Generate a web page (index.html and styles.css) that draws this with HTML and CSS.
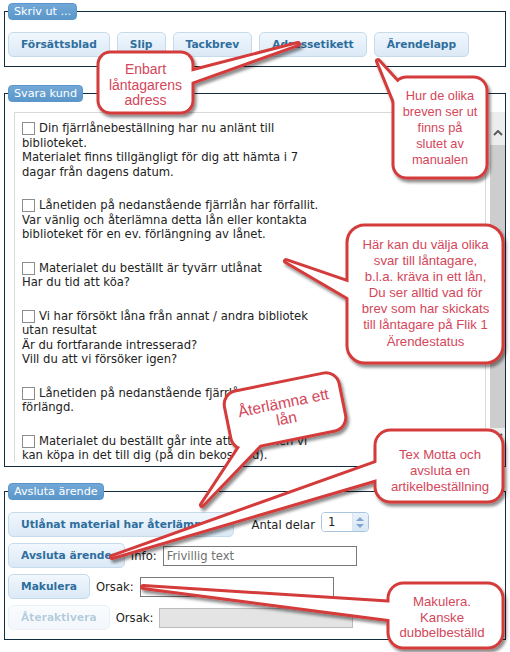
FILE: index.html
```html
<!DOCTYPE html>
<html lang="sv">
<head>
<meta charset="utf-8">
<title>Ärende</title>
<link rel="stylesheet" href="styles.css">
</head>
<body>
<div class="page">
  <fieldset class="fs fs-print">
    <legend>Skriv ut ...</legend>
    <div class="btnrow">
      <button class="btn">Försättsblad</button>
      <button class="btn">Slip</button>
      <button class="btn">Tackbrev</button>
      <button class="btn">Adressetikett</button>
      <button class="btn">Ärendelapp</button>
    </div>
  </fieldset>

  <fieldset class="fs fs-reply">
    <legend>Svara kund</legend>
    <div class="scrollwrap">
      <div class="letters">
        <p class="opt"><span class="cb"></span>Din fjärrlånebeställning har nu anlänt till<br>biblioteket.<br>Materialet finns tillgängligt för dig att hämta i 7<br>dagar från dagens datum.</p>
        <p class="opt"><span class="cb"></span>Lånetiden på nedanstående fjärrlån har förfallit.<br>Var vänlig och återlämna detta lån eller kontakta<br>biblioteket för en ev. förlängning av lånet.</p>
        <p class="opt"><span class="cb"></span>Materialet du beställt är tyvärr utlånat<br>Har du tid att köa?</p>
        <p class="opt"><span class="cb"></span>Vi har försökt låna från annat / andra bibliotek<br>utan resultat<br>Är du fortfarande intresserad?<br>Vill du att vi försöker igen?</p>
        <p class="opt"><span class="cb"></span>Lånetiden på nedanstående fjärrlån har blivit<br>förlängd.</p>
        <p class="opt"><span class="cb"></span>Materialet du beställt går inte att låna, men vi<br>kan köpa in det till dig (på din bekostnad).</p>
      </div>
      <div class="sbar">
        <svg class="chev chev-up" width="10" height="6" viewBox="0 0 10 6"><polyline points="1,5 5,1 9,5"/></svg>
        <div class="thumb"></div>
        <svg class="chev chev-down" width="10" height="6" viewBox="0 0 10 6"><polyline points="1,1 5,5 9,1"/></svg>
      </div>
    </div>
  </fieldset>

  <fieldset class="fs fs-close">
    <legend>Avsluta ärende</legend>
    <div class="row">
      <button class="btn">Utlånat material har återlämnats</button>
      <span class="lbl lbl-antal">Antal delar</span>
      <span class="spin"><span class="spin-val">1</span><span class="spin-btns"><span class="tri-up"></span><span class="tri-down"></span></span></span>
    </div>
    <div class="row">
      <button class="btn">Avsluta ärende</button>
      <span class="lbl">Info:</span>
      <input class="inp" type="text" placeholder="Frivillig text">
    </div>
    <div class="row">
      <button class="btn">Makulera</button>
      <span class="lbl">Orsak:</span>
      <input class="inp" type="text">
    </div>
    <div class="row">
      <button class="btn" disabled>Återaktivera</button>
      <span class="lbl">Orsak:</span>
      <input class="inp" type="text" disabled>
    </div>
  </fieldset>

  <svg class="callouts" width="510" height="652" viewBox="0 0 510 652">
    <defs>
      <filter id="sh" filterUnits="userSpaceOnUse" x="0" y="0" width="510" height="652">
        <feDropShadow dx="2" dy="3" stdDeviation="1.6" flood-color="#000" flood-opacity="0.45"/>
      </filter>
    </defs>
    <g filter="url(#sh)">
      <g class="edge"><rect x="99.5" y="53.5" width="92" height="58" rx="11"/><polygon points="298,44 186,73 186,84"/></g>
      <g class="fill"><rect x="99.5" y="53.5" width="92" height="58" rx="11"/><polygon points="298,44 186,73 186,84"/></g>
    </g>
    <g filter="url(#sh)">
      <g class="edge"><rect x="394.5" y="78.5" width="91" height="98" rx="12"/><polygon points="378,61 399,84 398,110"/></g>
      <g class="fill"><rect x="394.5" y="78.5" width="91" height="98" rx="12"/><polygon points="378,61 399,84 398,110"/></g>
    </g>
    <g filter="url(#sh)">
      <g class="edge"><rect x="348.5" y="226.5" width="153" height="135" rx="16"/><polygon points="286,261 356,285 356,302"/></g>
      <g class="fill"><rect x="348.5" y="226.5" width="153" height="135" rx="16"/><polygon points="286,261 356,285 356,302"/></g>
    </g>
    <g filter="url(#sh)">
      <g class="edge"><rect x="228" y="383" width="114" height="56" rx="12" transform="rotate(-11.5 285 411)"/><polygon points="202,505 242.6,443.1 266.1,438.3"/></g>
      <g class="fill"><rect x="228" y="383" width="114" height="56" rx="12" transform="rotate(-11.5 285 411)"/><polygon points="202,505 242.6,443.1 266.1,438.3"/></g>
    </g>
    <g filter="url(#sh)">
      <g class="edge"><rect x="376.5" y="431.5" width="125" height="69" rx="14"/><polygon points="112,557 384,460 384,477"/></g>
      <g class="fill"><rect x="376.5" y="431.5" width="125" height="69" rx="14"/><polygon points="112,557 384,460 384,477"/></g>
    </g>
    <g filter="url(#sh)">
      <g class="edge"><rect x="389.5" y="584.5" width="112" height="62" rx="14"/><polygon points="143,587 396,603 396,620"/></g>
      <g class="fill"><rect x="389.5" y="584.5" width="112" height="62" rx="14"/><polygon points="143,587 396,603 396,620"/></g>
    </g>
  </svg>

  <div class="ctext c1">Enbart<br>låntagarens<br>adress</div>
  <div class="ctext c2">Hur de olika<br>breven ser ut<br>finns på<br>slutet av<br>manualen</div>
  <div class="ctext c3">Här kan du välja olika<br>svar till låntagare,<br>b.l.a. kräva in ett lån,<br>Du ser alltid vad för<br>brev som har skickats<br>till låntagare på Flik 1<br>Ärendestatus</div>
  <div class="ctext c4">Återlämna ett<br>lån</div>
  <div class="ctext c5">Tex Motta och<br>avsluta en<br>artikelbeställning</div>
  <div class="ctext c6">Makulera.<br>Kanske<br>dubbelbeställd</div>
</div>
</body>
</html>
```

FILE: styles.css
```css
* { box-sizing: border-box; }

body {
  margin: 0;
  background: #fff;
  font-family: "DejaVu Sans", Verdana, sans-serif;
  color: #222;
}

.page {
  position: relative;
  width: 510px;
  height: 652px;
  overflow: hidden;
}

/* fieldsets */
.fs {
  margin: 0 4px;
  border: 1px solid #112b3f;
  padding: 12px 0 9px 3px;
  min-width: 0;
}
.fs-print { margin-top: 3px; }
.fs-reply { margin-top: 18px; padding: 10px 0 4px 3px; }
.fs-close { margin-top: 16px; }

legend {
  background: linear-gradient(#72a8d7, #5b97ca);
  color: #fff;
  font-size: 11.2px;
  line-height: 15px;
  padding: 0 5px;
  border: 1px solid #5a96c9;
  border-radius: 4px;
}

/* buttons */
.btnrow { display: flex; gap: 7px; }

.btn {
  height: 25px;
  padding: 0 12px;
  border: 1px solid #c5dbec;
  border-radius: 5px;
  background: linear-gradient(#f1f7fd, #dbe9f6);
  color: #2e6e9e;
  font-family: "DejaVu Sans", Verdana, sans-serif;
  font-weight: bold;
  font-size: 10.7px;
  line-height: 23px;
  white-space: nowrap;
}
.btn:disabled { opacity: 0.35; }

/* reply list */
.scrollwrap {
  display: flex;
  gap: 4px;
  height: 350px;
  margin-left: 6px;
}
.letters {
  flex: 1;
  border: 1px solid #d9d9d9;
  border-bottom: none;
  overflow: hidden;
  padding: 8px 0 0 7px;
  font-size: 11.6px;
  line-height: 14.5px;
}
.opt {
  margin: 0 0 19px;
  white-space: nowrap;
}
.cb {
  display: inline-block;
  width: 13px;
  height: 13px;
  border: 1px solid #8c8c8c;
  background: #fff;
  vertical-align: -3px;
  margin-right: 4px;
}

.sbar {
  width: 15px;
  background: #ededed;
  display: flex;
  flex-direction: column;
  align-items: center;
}
.chev polyline {
  fill: none;
  stroke: #5a5a5a;
  stroke-width: 2;
}
.chev-up { margin-top: 18px; }
.thumb {
  width: 15px;
  height: 283px;
  margin-top: 9px;
  background: #cdcdcd;
}
.chev-down { margin-top: 5px; }

/* close rows */
.row {
  display: flex;
  align-items: center;
  gap: 6px;
  height: 25px;
}
.row + .row { margin-top: 6px; }

.lbl { font-size: 11.6px; white-space: nowrap; }
.lbl-antal { margin-left: 12px; }

.spin {
  display: inline-flex;
  width: 48px;
  height: 20px;
  border: 1px solid #a9c5df;
  border-radius: 4px;
  overflow: hidden;
  margin-top: -5px;
}
.spin-val {
  flex: 1;
  background: #fff;
  padding-left: 6px;
  font-size: 11.6px;
  line-height: 18px;
}
.spin-btns {
  width: 16px;
  background: linear-gradient(#eaf2fa, #d8e7f5);
  border-left: 1px solid #dbe7f2;
  display: flex;
  flex-direction: column;
  align-items: center;
  justify-content: center;
  gap: 3px;
}
.tri-up, .tri-down {
  width: 0;
  height: 0;
  border-left: 4px solid transparent;
  border-right: 4px solid transparent;
}
.tri-up { border-bottom: 4px solid #7fa7cf; }
.tri-down { border-top: 4px solid #7fa7cf; }

.inp {
  width: 194px;
  height: 20px;
  border: 1px solid #7a7a7a;
  border-radius: 0;
  padding: 0 3px;
  font-family: "DejaVu Sans", Verdana, sans-serif;
  font-size: 11.6px;
  color: #222;
  background: #fff;
}
.inp::placeholder { color: #707070; }
.inp:disabled { background: #e4e4e4; border-color: #bdbdbd; }

/* callouts */
.callouts {
  position: absolute;
  left: 0;
  top: 0;
  pointer-events: none;
}
.edge {
  fill: #d43a3a;
  stroke: #d43a3a;
  stroke-width: 6;
  stroke-linejoin: round;
}
.fill { fill: #fff; }

.ctext {
  position: absolute;
  font-family: "Liberation Sans", Arial, sans-serif;
  color: #d4465a;
  text-align: center;
  font-size: 13.2px;
  line-height: 16px;
  white-space: nowrap;
}
.c1 { left: 98px; top: 62px; width: 95px; font-size: 14px; line-height: 15.5px; }
.c2 { left: 393px; top: 88px; width: 94px; font-size: 12.8px; }
.c3 { left: 348px; top: 237px; width: 155px; line-height: 16.1px; }
.c4 { left: 228px; top: 395px; width: 114px; font-size: 15.5px; line-height: 16px; transform: rotate(-11.5deg); }
.c5 { left: 376px; top: 447px; width: 128px; }
.c6 { left: 386px; top: 594px; width: 112px; line-height: 15.5px; }
```
